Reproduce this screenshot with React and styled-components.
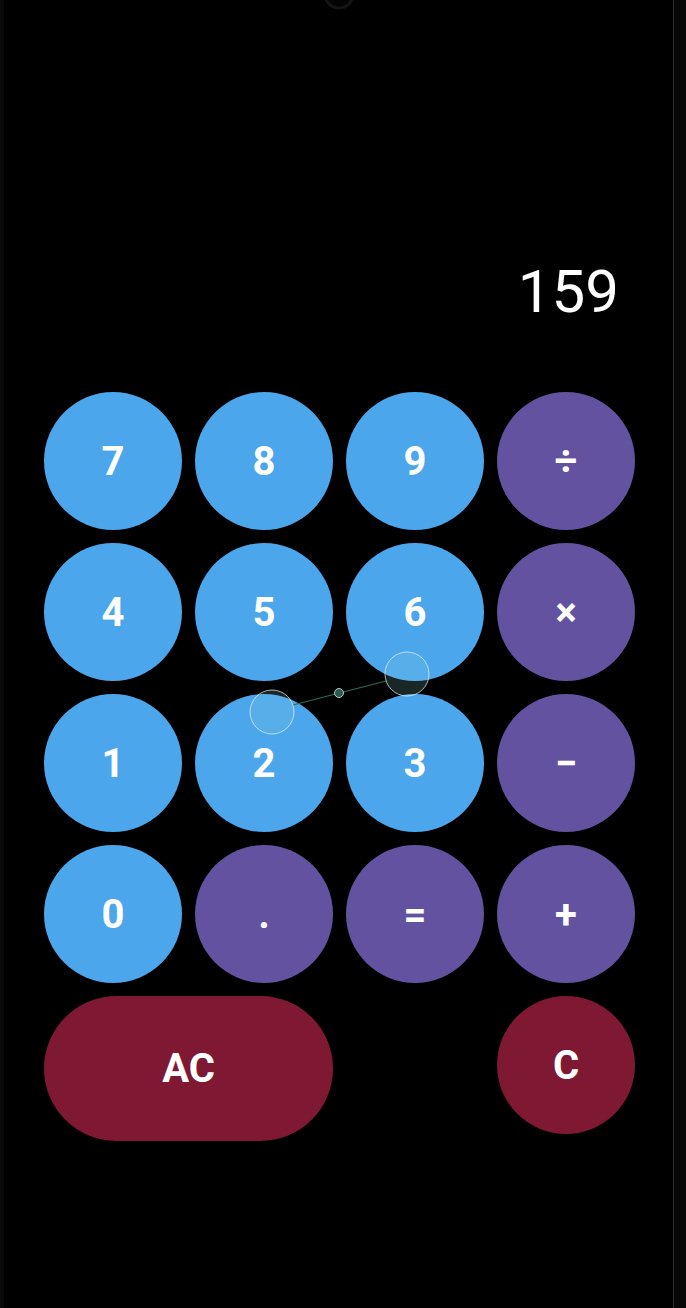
import React from "react";
import styled, { createGlobalStyle } from "styled-components";

const GlobalStyle = createGlobalStyle`
  html, body {
    margin: 0;
    padding: 0;
    background: #000;
  }
  body {
    font-family: Roboto, "Noto Sans", sans-serif;
  }
`;

const Phone = styled.div`
  position: relative;
  display: flex;
  width: 686px;
  height: 1308px;
  background: #000;
  overflow: hidden;
`;

const Bezel = styled.div`
  flex: 0 0 ${(props) => props.width}px;
  background: #080808;
  border-left: ${(props) => (props.edge ? "1px solid #2e2e2e" : "none")};
  box-sizing: border-box;
`;

const Screen = styled.div`
  flex: 1;
  display: flex;
  flex-direction: column;
  padding: 262px 0 0 40px;
  background: #000;
`;

const Display = styled.div`
  font-size: 60px;
  line-height: 60px;
  font-weight: 400;
  color: #fff;
  text-align: right;
  padding-right: 54px;
  margin-bottom: 70px;
`;

const Keypad = styled.div`
  display: grid;
  grid-template-columns: repeat(4, 138px);
  grid-auto-rows: 138px;
  column-gap: 13px;
  row-gap: 13px;
  align-items: start;
`;

const Key = styled.button`
  grid-column: span ${(props) => props.span || 1};
  width: 100%;
  height: ${(props) => props.h || 138}px;
  border: none;
  border-radius: 100px;
  background: ${(props) => props.bg};
  color: #fff;
  font-family: Roboto, "Noto Sans", sans-serif;
  font-size: 40px;
  font-weight: 700;
  display: flex;
  align-items: center;
  justify-content: center;
  padding: 0;
  cursor: pointer;
`;

const Spacer = styled.div``;

const Overlay = styled.svg`
  position: absolute;
  left: 0;
  top: 0;
  pointer-events: none;
`;

const BLUE = "#4ba6ec";
const PURPLE = "#62529f";
const RED = "#7e1833";

const keys = [
  ["7", BLUE], ["8", BLUE], ["9", BLUE], ["÷", PURPLE],
  ["4", BLUE], ["5", BLUE], ["6", BLUE], ["×", PURPLE],
  ["1", BLUE], ["2", BLUE], ["3", BLUE], ["−", PURPLE],
  ["0", BLUE], [".", PURPLE], ["=", PURPLE], ["+", PURPLE],
];

export default function App() {
  return (
    <>
      <GlobalStyle />
      <Phone>
        <Bezel width={4} />
        <Screen>
          <Display>159</Display>
          <Keypad>
            {keys.map(([label, bg]) => (
              <Key key={label} bg={bg}>{label}</Key>
            ))}
            <Key span={2} h={145} bg={RED}>AC</Key>
            <Spacer />
            <Key bg={RED}>C</Key>
          </Keypad>
        </Screen>
        <Bezel width={13} edge />
        <Overlay width="686" height="1308" viewBox="0 0 686 1308">
          <circle cx="339" cy="-6" r="14" fill="#040404" stroke="#141414" strokeWidth="3" />
          <line x1="293" y1="705" x2="386" y2="681" stroke="#2f6a58" strokeWidth="1.2" />
          <circle cx="272" cy="712" r="22" fill="rgba(150,210,215,0.18)" stroke="rgba(225,240,235,0.75)" strokeWidth="1" />
          <circle cx="407" cy="674" r="22" fill="rgba(150,210,215,0.18)" stroke="rgba(225,240,235,0.75)" strokeWidth="1" />
          <circle cx="339" cy="693" r="4.5" fill="#2a5a50" stroke="rgba(220,235,230,0.8)" strokeWidth="1" />
        </Overlay>
      </Phone>
    </>
  );
}
